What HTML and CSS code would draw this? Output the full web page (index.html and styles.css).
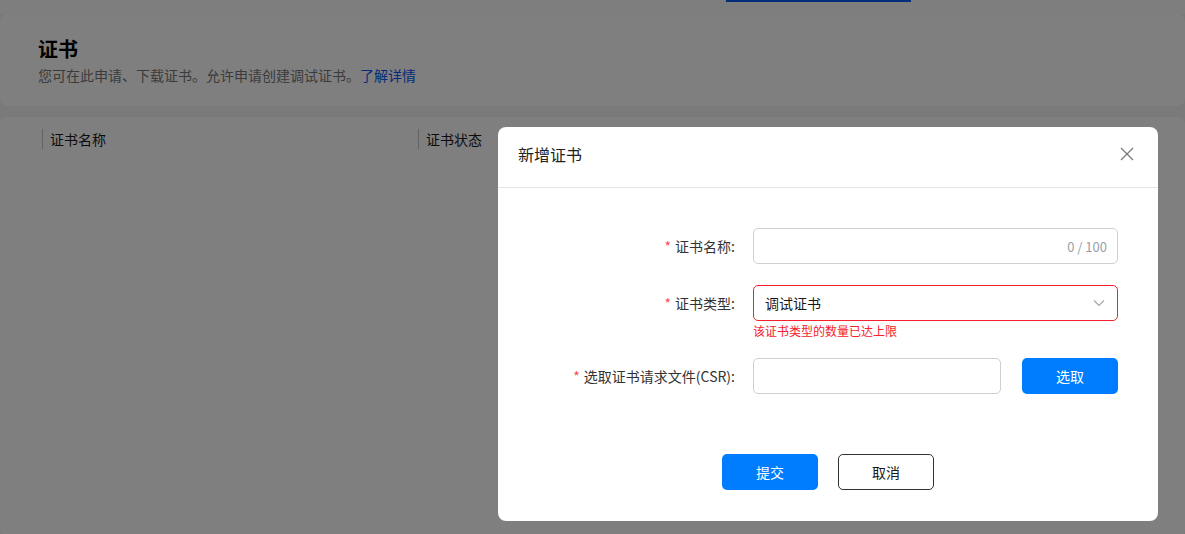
FILE: index.html
```html
<!DOCTYPE html>
<html lang="zh-CN">
<head>
    <meta charset="UTF-8">
    <meta name="viewport" content="width=device-width, initial-scale=1.0">
    <title>证书</title>
    <link rel="stylesheet" href="styles.css">
</head>
<body>

<div class="topbar">
    <div class="tab-line"></div>
</div>

<div class="page-head">
    <div class="page-title">证书</div>
    <div class="page-desc">您可在此申请、下载证书。允许申请创建调试证书。<a class="link" href="#">了解详情</a></div>
</div>

<div class="table-card">
    <div class="table-head">
        <div class="th">证书名称</div>
        <div class="th">证书状态</div>
    </div>
</div>

<div class="mask"></div>

<div class="dialog">
    <div class="dialog-header">
        <div class="dialog-title">新增证书</div>
        <svg class="close" width="14" height="14" viewBox="0 0 14 14">
            <path d="M1 1 L13 13 M13 1 L1 13" stroke="#7a7a7a" stroke-width="1.3" fill="none"/>
        </svg>
    </div>

    <div class="dialog-body">
        <div class="form-row">
            <label class="form-label"><span class="req">*</span>证书名称:</label>
            <div class="field">
                <div class="input">
                    <span class="counter">0 / 100</span>
                </div>
            </div>
        </div>

        <div class="form-row row-type">
            <label class="form-label"><span class="req">*</span>证书类型:</label>
            <div class="field">
                <div class="input select is-error">
                    <span class="select-value">调试证书</span>
                    <svg width="12" height="8" viewBox="0 0 12 8">
                        <path d="M1 1.5 L6 6.5 L11 1.5" stroke="#a8a8a8" stroke-width="1.2" fill="none"/>
                    </svg>
                </div>
                <div class="error-text">该证书类型的数量已达上限</div>
            </div>
        </div>

        <div class="form-row row-last">
            <label class="form-label"><span class="req">*</span>选取证书请求文件(CSR):</label>
            <div class="field field-file">
                <div class="input"></div>
                <button class="btn btn-primary">选取</button>
            </div>
        </div>
    </div>

    <div class="dialog-footer">
        <button class="btn btn-primary">提交</button>
        <button class="btn btn-default">取消</button>
    </div>
</div>

</body>
</html>
```

FILE: styles.css
```css
* {
    margin: 0;
    padding: 0;
    box-sizing: border-box;
    font-family: "Noto Sans CJK SC", "Noto Sans", sans-serif;
}
body {
    background-color: #f4f4f4;
    width: 1185px;
    height: 534px;
    overflow: hidden;
    color: #191919;
}
.topbar {
    height: 14px;
    background-color: #fcfcfc;
    padding-left: 726px;
}
.tab-line {
    width: 185px;
    height: 2px;
    background-color: #0a59f7;
}
.page-head {
    height: 92px;
    background-color: #ffffff;
    border-radius: 8px;
    padding: 21px 38px 0;
}
.page-title {
    font-size: 20px;
    font-weight: 700;
    line-height: 28px;
    color: #000;
}
.page-desc {
    margin-top: 2px;
    font-size: 14px;
    line-height: 20px;
    color: #777;
}
.link {
    color: #0a59f7;
    text-decoration: none;
}
.table-card {
    margin-top: 11px;
    height: 420px;
    background-color: #ffffff;
    border-radius: 8px;
    padding: 12px 0 0 42px;
}
.table-head {
    display: flex;
}
.th {
    width: 376px;
    border-left: 1px solid #c8c8c8;
    padding-left: 7px;
    font-size: 14px;
    line-height: 20px;
    height: 20px;
    color: #191919;
}
.mask {
    position: fixed;
    inset: 0;
    background-color: rgba(0, 0, 0, 0.5);
}
.dialog {
    position: fixed;
    left: 498px;
    top: 127px;
    width: 660px;
    height: 394px;
    background-color: #ffffff;
    border-radius: 8px;
}
.dialog-header {
    height: 61px;
    border-bottom: 1px solid #e6e6e6;
    display: flex;
    align-items: center;
    justify-content: space-between;
    padding: 0 24px 6px 20px;
}
.dialog-title {
    font-size: 16px;
    color: #222;
}
.dialog-body {
    padding: 40px 40px 0;
}
.form-row {
    display: grid;
    grid-template-columns: 197px 365px;
    column-gap: 18px;
    margin-bottom: 21px;
}
.row-type {
    margin-bottom: 19px;
}
.row-last {
    margin-bottom: 0;
}
.form-label {
    font-size: 14px;
    line-height: 36px;
    text-align: right;
    color: #333;
}
.req {
    color: #fa4d4f;
    margin-right: 4px;
}
.input {
    height: 36px;
    border: 1px solid #cfcfcf;
    border-radius: 5px;
    display: flex;
    align-items: center;
    justify-content: flex-end;
    padding: 0 10px;
}
.counter {
    font-size: 13px;
    color: #9a9ea8;
}
.select {
    justify-content: space-between;
    padding: 0 12px 0 11px;
}
.is-error {
    border-color: #f5222d;
}
.select-value {
    font-size: 14px;
    color: #191919;
}
.error-text {
    font-size: 12px;
    line-height: 17px;
    color: #f5222d;
    padding-top: 1px;
}
.field-file {
    display: flex;
    gap: 21px;
}
.field-file .input {
    flex: 1;
}
.btn {
    width: 96px;
    height: 36px;
    border-radius: 5px;
    font-size: 14px;
    cursor: pointer;
}
.btn-primary {
    border: none;
    background-color: #007dff;
    color: #ffffff;
}
.btn-default {
    border: 1px solid #333;
    background-color: #ffffff;
    color: #191919;
}
.dialog-footer {
    display: flex;
    justify-content: center;
    gap: 20px;
    margin-top: 60px;
}
```
